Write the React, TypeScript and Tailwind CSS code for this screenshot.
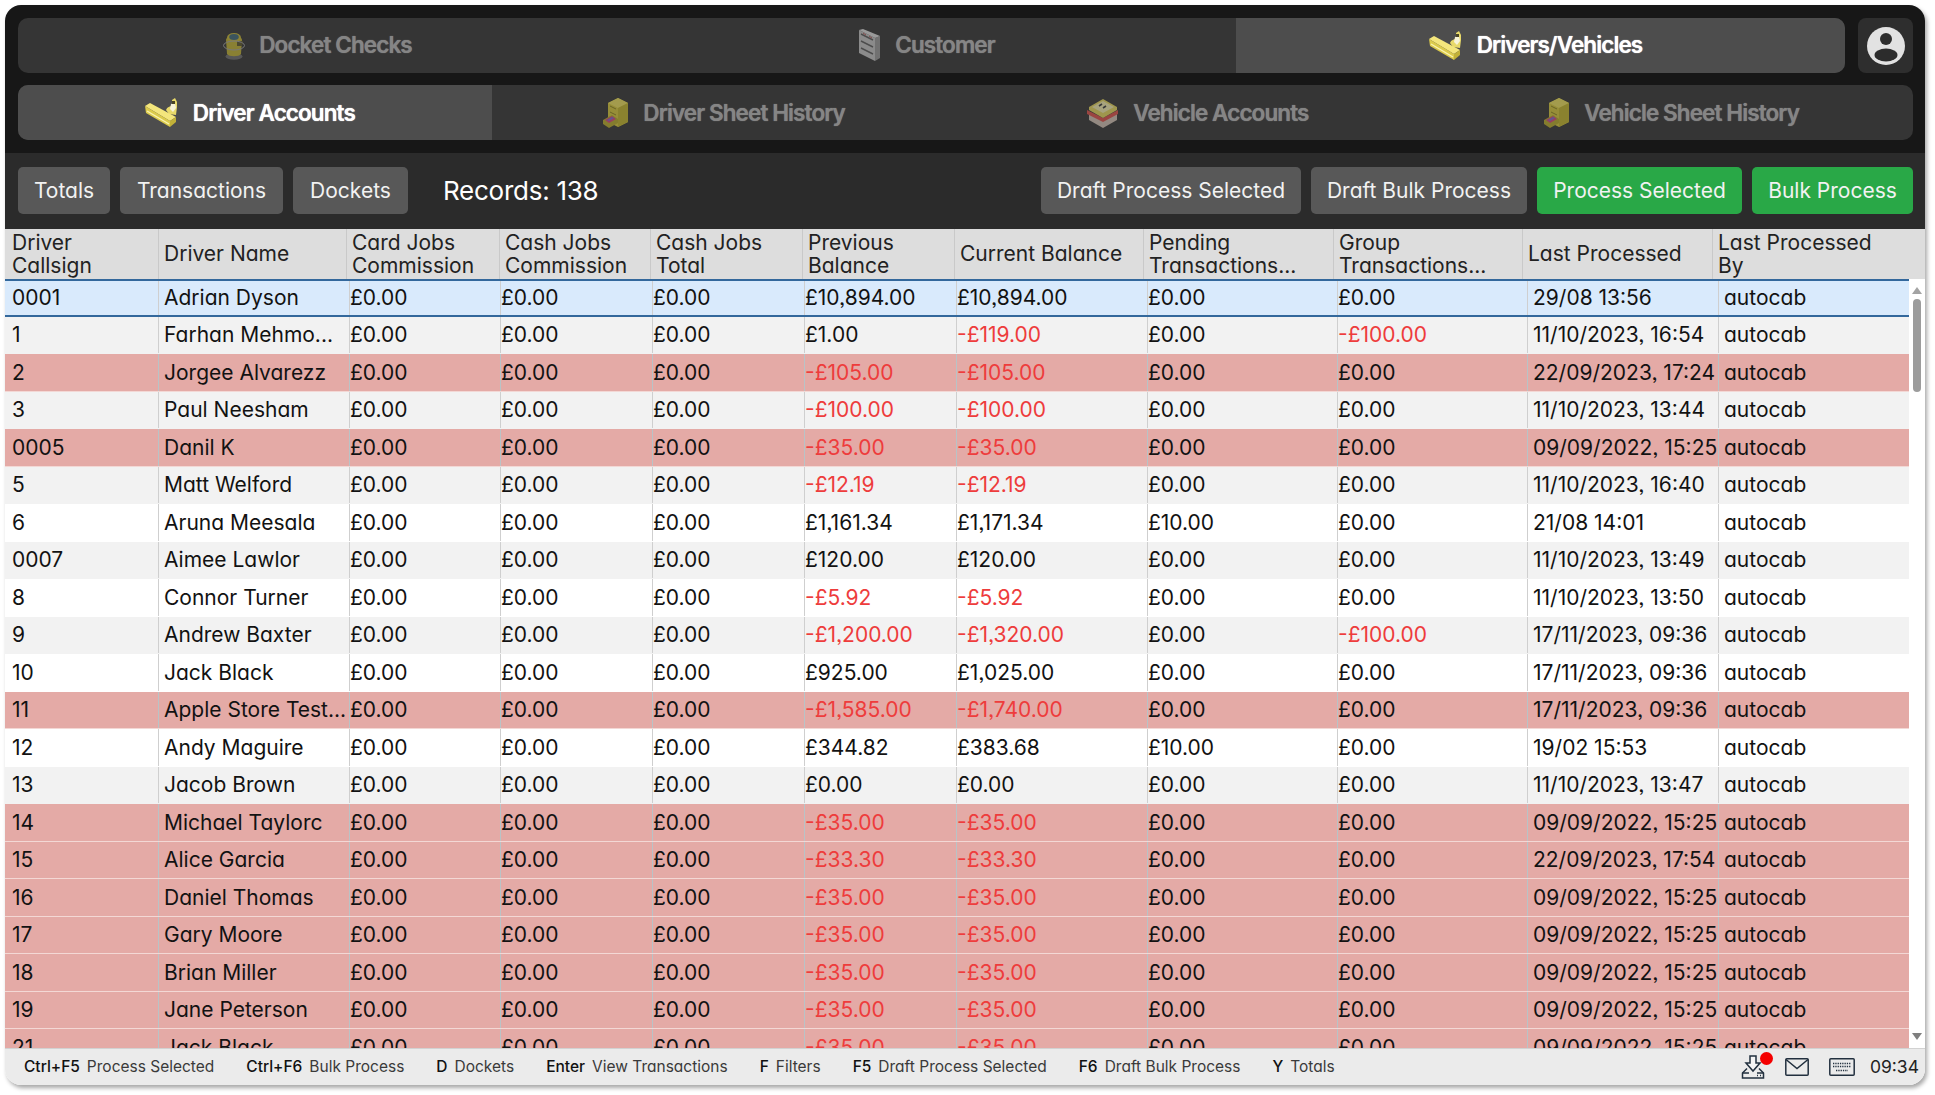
// App.tsx
const FONT = "font-['Inter','Liberation_Sans',sans-serif] [font-feature-settings:'cv11','ss03']";

const HEADERS = [
  "Driver\nCallsign",
  "Driver Name",
  "Card Jobs\nCommission",
  "Cash Jobs\nCommission",
  "Cash Jobs\nTotal",
  "Previous\nBalance",
  "Current Balance",
  "Pending\nTransactions...",
  "Group\nTransactions...",
  "Last Processed",
  "Last Processed\nBy",
];

type Row = {
  callsign: string;
  name: string;
  prev: string;
  cur: string;
  pending?: string;
  group?: string;
  last: string;
};

const RED_DATE = "09/09/2022, 15:25";

const ROWS: Row[] = [
  { callsign: "0001", name: "Adrian Dyson", prev: "£10,894.00", cur: "£10,894.00", last: "29/08 13:56" },
  { callsign: "1", name: "Farhan Mehmo...", prev: "£1.00", cur: "-£119.00", group: "-£100.00", last: "11/10/2023, 16:54" },
  { callsign: "2", name: "Jorgee Alvarezz", prev: "-£105.00", cur: "-£105.00", last: "22/09/2023, 17:24" },
  { callsign: "3", name: "Paul Neesham", prev: "-£100.00", cur: "-£100.00", last: "11/10/2023, 13:44" },
  { callsign: "0005", name: "Danil K", prev: "-£35.00", cur: "-£35.00", last: RED_DATE },
  { callsign: "5", name: "Matt Welford", prev: "-£12.19", cur: "-£12.19", last: "11/10/2023, 16:40" },
  { callsign: "6", name: "Aruna Meesala", prev: "£1,161.34", cur: "£1,171.34", pending: "£10.00", last: "21/08 14:01" },
  { callsign: "0007", name: "Aimee Lawlor", prev: "£120.00", cur: "£120.00", last: "11/10/2023, 13:49" },
  { callsign: "8", name: "Connor Turner", prev: "-£5.92", cur: "-£5.92", last: "11/10/2023, 13:50" },
  { callsign: "9", name: "Andrew Baxter", prev: "-£1,200.00", cur: "-£1,320.00", group: "-£100.00", last: "17/11/2023, 09:36" },
  { callsign: "10", name: "Jack Black", prev: "£925.00", cur: "£1,025.00", last: "17/11/2023, 09:36" },
  { callsign: "11", name: "Apple Store Test...", prev: "-£1,585.00", cur: "-£1,740.00", last: "17/11/2023, 09:36" },
  { callsign: "12", name: "Andy Maguire", prev: "£344.82", cur: "£383.68", pending: "£10.00", last: "19/02 15:53" },
  { callsign: "13", name: "Jacob Brown", prev: "£0.00", cur: "£0.00", last: "11/10/2023, 13:47" },
  { callsign: "14", name: "Michael Taylorc", prev: "-£35.00", cur: "-£35.00", last: RED_DATE },
  { callsign: "15", name: "Alice Garcia", prev: "-£33.30", cur: "-£33.30", last: "22/09/2023, 17:54" },
  { callsign: "16", name: "Daniel Thomas", prev: "-£35.00", cur: "-£35.00", last: RED_DATE },
  { callsign: "17", name: "Gary Moore", prev: "-£35.00", cur: "-£35.00", last: RED_DATE },
  { callsign: "18", name: "Brian Miller", prev: "-£35.00", cur: "-£35.00", last: RED_DATE },
  { callsign: "19", name: "Jane Peterson", prev: "-£35.00", cur: "-£35.00", last: RED_DATE },
  { callsign: "21", name: "Jack Black", prev: "-£35.00", cur: "-£35.00", last: RED_DATE },
];

const RED_ROWS = ["2", "0005", "11", "14", "15", "16", "17", "18", "19", "21"];

const SHORTCUTS = [
  ["Ctrl+F5", "Process Selected"],
  ["Ctrl+F6", "Bulk Process"],
  ["D", "Dockets"],
  ["Enter", "View Transactions"],
  ["F", "Filters"],
  ["F5", "Draft Process Selected"],
  ["F6", "Draft Bulk Process"],
  ["Y", "Totals"],
];

const DeskIcon = () => (
  <svg viewBox="0 0 34 29" className="h-[29px] w-[34px]">
    <path d="M21 12 C22 9 25 8 27 8 L27 2 L30 0 L32 4 L32 9 L31 17 L24 16 Z" fill="#e8d96a" />
    <path d="M26 6 L30 5 L31 10 L28 14 L25 11 Z" fill="#f7f3d8" />
    <path d="M27 3 L30 3 L30 6 L27 6 Z" fill="#4a4526" />
    <path d="M0 8 L5 5 L31 19 L25 23 Z" fill="#f4e67c" />
    <path d="M0 8 L25 23 L25 29 L1 15 Z" fill="#dccb4c" />
    <path d="M25 23 L31 19 L31 24 L25 29 Z" fill="#c2b138" />
    <path d="M2 13 L24 26" stroke="#fbf4b0" strokeWidth="1.4" />
  </svg>
);

const JarIcon = () => (
  <svg viewBox="0 0 22 28" className="h-[28px] w-[22px]">
    <ellipse cx="11" cy="24.5" rx="8.5" ry="3.2" fill="#6e6e6e" />
    <path d="M3 8 C3 3 19 3 19 8 L18 22 C16 25 6 25 4 22 Z" fill="#c2b233" />
    <ellipse cx="11" cy="5.5" rx="7" ry="4.5" fill="#c9b935" />
    <ellipse cx="11" cy="5" rx="4.8" ry="3" fill="#3f6a78" />
    <path d="M14 9 L20 9 L19 14 L14 14 Z" fill="#5b562c" />
    <ellipse cx="11" cy="13.5" rx="10.5" ry="4.5" fill="none" stroke="#a5a5a5" strokeWidth="1" />
  </svg>
);

const ShelfIcon = () => (
  <svg viewBox="0 0 23 33" className="h-[33px] w-[23px]">
    <path d="M1 1 L17 9 L17 32 L1 24 Z" fill="#c4c4c4" />
    <path d="M17 9 L22 7 L22 29 L17 32 Z" fill="#9a9a9a" />
    <path d="M1 1 L5 0 L22 7 L17 9 Z" fill="#dedede" />
    <path d="M3 5 L15 11 M3 12 L15 18 M3 19 L15 25" stroke="#5c5c5c" strokeWidth="1.4" />
    <path d="M5 4 L8 6 M11 7 L14 9" stroke="#b85a5a" strokeWidth="1" />
  </svg>
);

const CabinetIcon = () => (
  <svg viewBox="0 0 27 31" className="h-[31px] w-[27px]">
    <path d="M6 6 L16 1 L26 6 L26 25 L16 30 L6 25 Z" fill="#d8ca3a" />
    <path d="M6 6 L16 1 L26 6 L16 11 Z" fill="#ece05e" />
    <path d="M16 11 L26 6 L26 25 L16 30 Z" fill="#c3b62c" />
    <path d="M8 9 L14 12 M8 15 L14 18" stroke="#8f8520" strokeWidth="1" />
    <path d="M1 23 L10 18 L16 22 L16 26 L7 31 L1 27 Z" fill="#b9ac2a" />
    <path d="M3 23 L10 19 L14 22 L7 26 Z" fill="#d8457e" />
    <path d="M5 23 L10 20 L12 21 L7 24 Z" fill="#7b6fd0" />
  </svg>
);

const BoxIcon = () => (
  <svg viewBox="0 0 33 30" className="h-[30px] w-[33px]">
    <path d="M3 14 L17 21 L31 14 L31 22 L17 30 L3 22 Z" fill="#d2c2b4" />
    <path d="M1 12 L17 20 L32 12 L32 16 L17 24 L1 16 Z" fill="#e0504a" />
    <path d="M3 9 L17 1 L31 9 L31 12 L17 20 L3 12 Z" fill="#e6d75e" />
    <path d="M6 9 L17 3 L28 9 L17 15 Z" fill="#f4edb0" />
    <path d="M13 8 L16 6 M17 10 L20 8" stroke="#3a3a3a" strokeWidth="1.6" />
  </svg>
);

const AvatarIcon = () => (
  <svg viewBox="0 0 38 38" className="h-[38px] w-[38px]">
    <circle cx="19" cy="19" r="19" fill="#e2e2e2" />
    <circle cx="19" cy="12" r="6" fill="#2c2c2c" />
    <ellipse cx="19" cy="28" rx="11.5" ry="6.5" fill="#2c2c2c" />
  </svg>
);

const DownloadIcon = () => (
  <svg viewBox="0 0 24 24" fill="none" stroke="#22303f" strokeWidth="1.5" className="h-[24px] w-[24px]">
    <path d="M9 1 H15 V8 H19 L12 16 L5 8 H9 Z" fill="#f5f5f5" />
    <path d="M6 13.5 L1.5 18 V23 H22.5 V18 L18 13.5" />
    <path d="M1.5 18 H8 M16 18 H22.5" />
    <path d="M16 20.5 H17 M19 20.5 H20" />
  </svg>
);

const MailIcon = () => (
  <svg viewBox="0 0 24 18" fill="none" stroke="#22303f" strokeWidth="1.5" className="h-[18px] w-[24px]">
    <rect x="0.8" y="0.8" width="22.4" height="16.4" rx="1" />
    <path d="M1 1.5 L12 10.5 L23 1.5" />
  </svg>
);

const KeyboardIcon = () => (
  <svg viewBox="0 0 26 18" fill="none" stroke="#22303f" strokeWidth="1.5" className="h-[18px] w-[26px]">
    <rect x="0.8" y="0.8" width="24.4" height="16.4" rx="1" />
    <path d="M4 5.5 H22 M4 8.5 H22 M7 12.5 H19" strokeDasharray="1.3 1" strokeWidth="1.3" />
  </svg>
);

type Tab = { label: string; icon: React.ReactNode; active?: boolean };

const TOP_TABS: Tab[] = [
  { label: "Docket Checks", icon: <JarIcon /> },
  { label: "Customer", icon: <ShelfIcon /> },
  { label: "Drivers/Vehicles", icon: <DeskIcon />, active: true },
];

const SUB_TABS: Tab[] = [
  { label: "Driver Accounts", icon: <DeskIcon />, active: true },
  { label: "Driver Sheet History", icon: <CabinetIcon /> },
  { label: "Vehicle Accounts", icon: <BoxIcon /> },
  { label: "Vehicle Sheet History", icon: <CabinetIcon /> },
];

const TabBar = ({ tabs, className, textClass }: { tabs: Tab[]; className: string; textClass?: string }) => (
  <div className={`flex h-[55px] overflow-hidden rounded-[10px] bg-[#353535] ${className}`}>
    {tabs.map((t) => (
      <div
        key={t.label}
        className={`flex flex-1 items-center justify-center gap-[14px] pr-[10px] text-[22.5px] font-semibold tracking-[-0.04em] [text-shadow:0_0_1px_currentColor] ${
          t.active ? "bg-[#4d4d4d] text-white" : "text-[#858585]"
        }`}
      >
        <span className={t.active ? "" : "opacity-60"}>{t.icon}</span>
        <span className={textClass}>{t.label}</span>
      </div>
    ))}
  </div>
);

const ActionButton = ({ label, width, green }: { label: string; width: string; green?: boolean }) => (
  <button
    className={`flex h-[47px] items-center justify-center rounded-[5px] text-[21px] text-[#f2f2f2] ${width} ${
      green ? "bg-[#29a847]" : "bg-[#585858]"
    }`}
  >
    {label}
  </button>
);

const HEAD_GRID =
  "grid grid-cols-[153px_188px_153px_151px_152px_152px_189px_190px_189px_190px_213px]";
const BODY_GRID =
  "grid grid-cols-[153px_191px_151px_152px_152px_152px_191px_190px_190px_191px_191px]";

const Cell = ({ value, money, idx, red }: { value: string; money?: boolean; idx: number; red: boolean }) => {
  const negative = value.startsWith("-");
  return (
    <div
      className={`flex h-full items-center overflow-hidden whitespace-nowrap border-l text-[21px] ${
        red ? "border-[#b9c3c6]" : "border-[#cfcfcf]"
      } ${idx === 0 ? "border-l-0 pl-[7px]" : money ? "pl-0" : "pl-[5px]"} ${
        negative ? "text-[#ee3c3c]" : "text-[#121212]"
      }`}
    >
      {value}
    </div>
  );
};

const rowColour = (i: number, red: boolean) => {
  if (i === 0) return "bg-[#d9eafc] border-y-2 border-[#33689c]";
  if (red) return "bg-[#e4aaa6] border-b border-[#f3d8d5]";
  return i % 2 === 1 ? "bg-[#f2f2f2] border-b border-[#f2f2f2]" : "bg-white border-b border-white";
};

const App = () => {
  return (
    <div className={`h-[1095px] w-[1935px] overflow-hidden bg-white px-[5px] py-[5px] ${FONT}`}>
      <div className="flex h-[1080px] w-[1920px] flex-col overflow-hidden rounded-[16px] shadow-[2px_3px_4px_rgba(0,0,0,0.35)]">
        {/* top navigation */}
        <div className="flex h-[148px] shrink-0 flex-col gap-[12px] bg-[#171717] pl-[13px] pr-[12px] pt-[13px]">
          <div className="flex gap-[13px]">
            <TabBar tabs={TOP_TABS} className="flex-1" textClass="-translate-y-[1.5px]" />
            <div className="flex h-[55px] w-[55px] items-center justify-center rounded-[8px] bg-[#2e2e2e]">
              <AvatarIcon />
            </div>
          </div>
          <TabBar tabs={SUB_TABS} className="w-full" />
        </div>

        {/* toolbar */}
        <div className="flex h-[76px] shrink-0 items-start bg-[#2b2b2b] pl-[13px] pr-[12px] pt-[14px]">
          <div className="flex gap-[10px]">
            <ActionButton label="Totals" width="w-[92px]" />
            <ActionButton label="Transactions" width="w-[163px]" />
            <ActionButton label="Dockets" width="w-[115px]" />
          </div>
          <span className="ml-[35px] text-[26px] leading-[47px] tracking-[-0.01em] text-white">Records: 138</span>
          <div className="ml-auto flex gap-[10px]">
            <ActionButton label="Draft Process Selected" width="w-[260px]" />
            <ActionButton label="Draft Bulk Process" width="w-[216px]" />
            <ActionButton label="Process Selected" width="w-[205px]" green />
            <ActionButton label="Bulk Process" width="w-[161px]" green />
          </div>
        </div>

        {/* table header */}
        <div className={`${HEAD_GRID} h-[50px] shrink-0 bg-[#dddddd]`}>
          {HEADERS.map((h, i) => (
            <div
              key={h}
              className={`flex items-center whitespace-pre-line pb-[1px] text-[21px] leading-[23px] text-[#222] ${
                i === 0 ? "pl-[7px]" : "border-l border-[#c9c9c9] pl-[5px]"
              }`}
            >
              {h}
            </div>
          ))}
        </div>

        {/* table body */}
        <div className="relative flex min-h-0 flex-1 bg-white">
          <div className="min-w-0 flex-1 overflow-hidden">
            {ROWS.map((r, i) => {
              const red = RED_ROWS.includes(r.callsign);
              const cells = [
                { v: r.callsign },
                { v: r.name },
                { v: "£0.00", m: true },
                { v: "£0.00", m: true },
                { v: "£0.00", m: true },
                { v: r.prev, m: true },
                { v: r.cur, m: true },
                { v: r.pending ?? "£0.00", m: true },
                { v: r.group ?? "£0.00", m: true },
                { v: r.last },
                { v: "autocab" },
              ];
              return (
                <div key={r.callsign + r.name} className={`${BODY_GRID} h-[37.5px] ${rowColour(i, red)}`}>
                  {cells.map((c, j) => (
                    <Cell key={j} value={c.v} money={c.m} idx={j} red={red} />
                  ))}
                </div>
              );
            })}
          </div>

          {/* scrollbar */}
          <div className="flex w-[16px] shrink-0 flex-col items-center bg-white">
            <div className="mt-[8px] h-0 w-0 border-x-[5px] border-b-[7px] border-x-transparent border-b-[#a3a3a3]" />
            <div className="mt-[5px] h-[93px] w-[8px] rounded-full bg-[#9c9c9c]" />
            <div className="mb-[8px] mt-auto h-0 w-0 border-x-[5px] border-t-[7px] border-x-transparent border-t-[#7f7f7f]" />
          </div>
        </div>

        {/* footer */}
        <div className="flex h-[37px] shrink-0 items-center gap-[32px] border-t border-[#d2d2d2] bg-[#ebebeb] pl-[19px] pr-[6px] text-[15.5px] text-[#3a3a3a]">
          {SHORTCUTS.map(([k, l]) => (
            <div key={k} className="flex items-center gap-[7px] whitespace-nowrap">
              <span className="font-medium text-[#111]">{k}</span>
              <span>{l}</span>
            </div>
          ))}
          <div className="ml-auto flex items-center gap-[15px]">
            <div className="flex items-center gap-[20px]">
              <div className="relative">
                <DownloadIcon />
                <span className="absolute right-[-8px] top-[-3px] h-[13px] w-[13px] rounded-full bg-[#f40000]" />
              </div>
              <MailIcon />
              <KeyboardIcon />
            </div>
            <span className="text-[17.5px] text-[#222]">09:34</span>
          </div>
        </div>
      </div>
    </div>
  );
};

export default App;
